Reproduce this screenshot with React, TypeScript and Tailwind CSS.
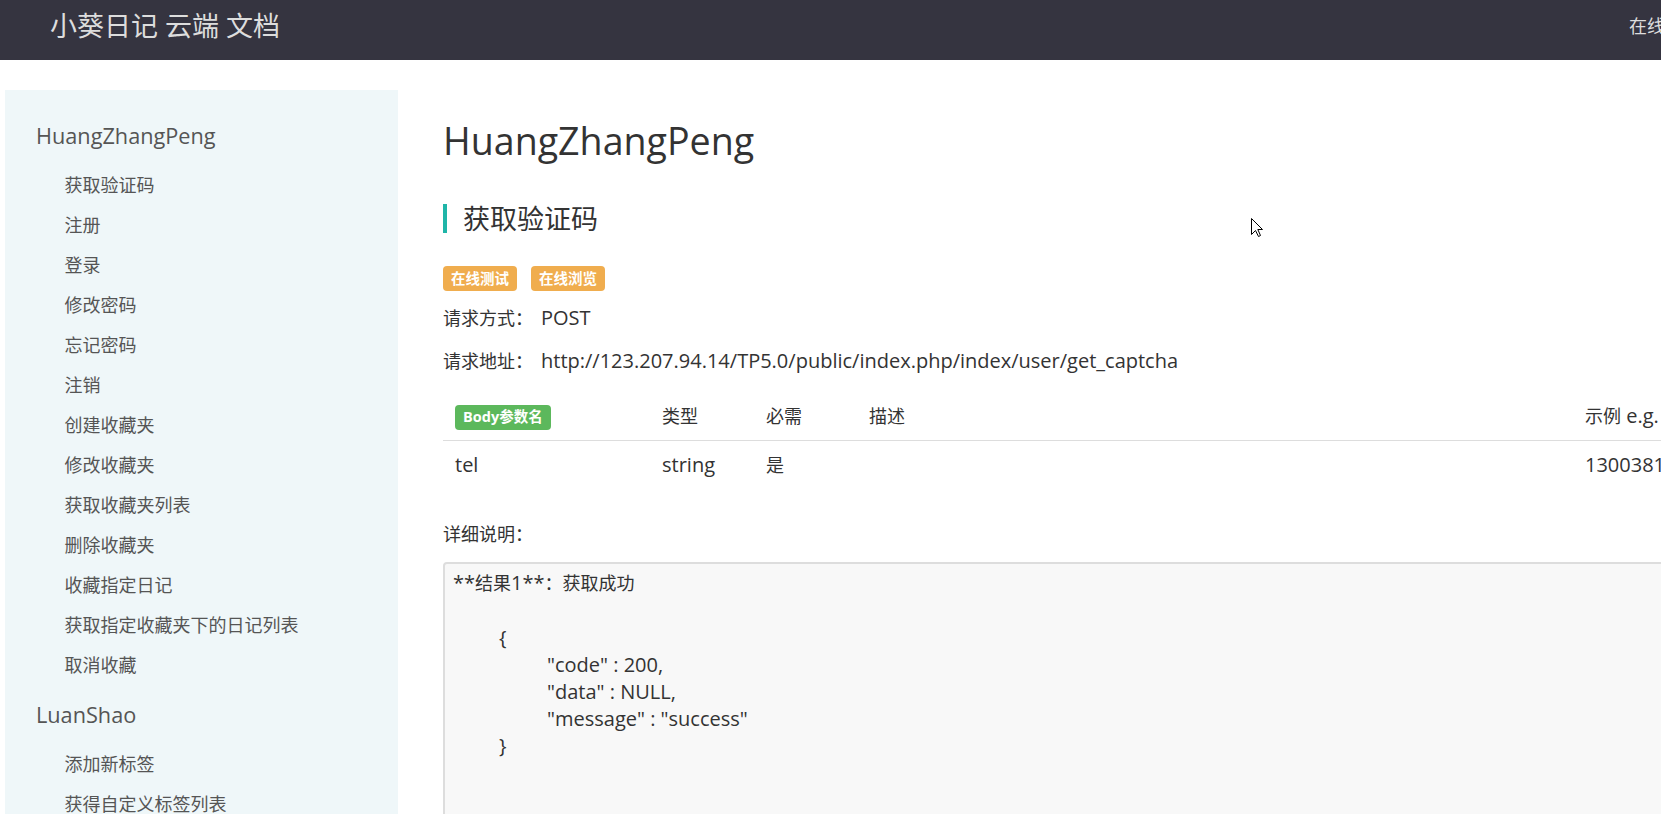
import React from 'react';

type Group = { title: string; items: string[] };

const groups: Group[] = [
    {
        title: 'HuangZhangPeng',
        items: [
            '获取验证码',
            '注册',
            '登录',
            '修改密码',
            '忘记密码',
            '注销',
            '创建收藏夹',
            '修改收藏夹',
            '获取收藏夹列表',
            '删除收藏夹',
            '收藏指定日记',
            '获取指定收藏夹下的日记列表',
            '取消收藏',
        ],
    },
    {
        title: 'LuanShao',
        items: ['添加新标签', '获得自定义标签列表'],
    },
];

const Sidebar: React.FC = () => (
    <aside className="w-[393px] shrink-0 min-h-[760px] bg-[#eff7f9] pt-[31px] pl-[31px] text-[#555]">
        {groups.map((g, gi) => (
            <div key={g.title} className={gi > 0 ? 'mt-[15px]' : ''}>
                <div className="text-[21.7px] leading-[30px]">{g.title}</div>
                <ul className="mt-[14px]">
                    {g.items.map((item) => (
                        <li key={item} className="h-[40px] flex items-center pl-[28.6px] text-[18px] whitespace-nowrap">
                            {item}
                        </li>
                    ))}
                </ul>
            </div>
        ))}
    </aside>
);

const Cursor: React.FC = () => (
    <svg className="absolute left-[1251px] top-[218px]" width="13" height="20" viewBox="0 0 13 20">
        <path d="M0.5 0.5 L0.5 16.5 L4.5 12.5 L7.5 18.5 L9.5 17.5 L6.8 11.5 L11.5 11.5 Z" fill="#fff" stroke="#000" strokeWidth="1" />
    </svg>
);

export default function App() {
    return (
        <div className="relative w-[1661px] h-[814px] overflow-hidden bg-white font-['Open_Sans','Noto_Sans_CJK_SC',sans-serif]">
            <header className="h-[60px] bg-[#353440]">
                <div className="w-[1751px] h-full px-[50px] pb-2 flex items-center justify-between text-[#ddd] whitespace-nowrap">
                    <span className="text-[27px]">小葵日记 云端 文档</span>
                    <span className="text-[18px]">在线测试</span>
                </div>
            </header>

            <div className="flex items-start pt-[30px] pl-[5px]">
                <Sidebar />

                <main className="ml-[45px] w-[1330px] shrink-0 pt-[29px] text-[#333] text-[18px]">
                    <h1 className="text-[37.6px] leading-[44px]">HuangZhangPeng</h1>

                    <h2 className="mt-[41px] border-l-4 border-[#1fb5a8] pl-4 text-[27px] leading-[29px]">获取验证码</h2>

                    <div className="mt-[33px] flex gap-[14px]">
                        <span className="h-[25px] px-[8px] rounded bg-[#f0ad4e] text-white text-[14.5px] font-bold leading-[25px]">在线测试</span>
                        <span className="h-[25px] px-[8px] rounded bg-[#f0ad4e] text-white text-[14.5px] font-bold leading-[25px]">在线浏览</span>
                    </div>

                    <p className="mt-[13px] leading-[27px]">
                        请求方式：<span className="ml-[8px] text-[20px]">POST</span>
                    </p>
                    <p className="mt-[15px] leading-[27px] whitespace-nowrap">
                        请求地址：<span className="ml-[8px] text-[20px]">http://123.207.94.14/TP5.0/public/index.php/index/user/get_captcha</span>
                    </p>

                    <div className="mt-[17px]">
                        <div className="grid grid-cols-[207px_104px_103px_716px_200px] h-[49px] items-center border-b border-[#ddd]">
                            <div className="px-3">
                                <span className="inline-flex items-center h-[25px] px-[8px] rounded bg-[#5cb85c] text-white text-[14.5px] font-bold">Body参数名</span>
                            </div>
                            <div className="px-3">类型</div>
                            <div className="px-3">必需</div>
                            <div className="px-3">描述</div>
                            <div className="px-3 whitespace-nowrap">
                                示例<span className="text-[20px]"> e.g.</span>
                            </div>
                        </div>
                        <div className="grid grid-cols-[207px_104px_103px_716px_200px] h-[48px] items-center">
                            <div className="px-3 text-[20px]">tel</div>
                            <div className="px-3 text-[20px]">string</div>
                            <div className="px-3">是</div>
                            <div className="px-3"></div>
                            <div className="px-3 text-[20px]">13003810000</div>
                        </div>
                    </div>

                    <p className="mt-[32px] leading-[27px]">详细说明：</p>

                    <div className="mt-[14px] h-[300px] border-2 border-[#ddd] rounded bg-[#f8f8f8] pt-[5px] pl-[8px] leading-[27px] whitespace-pre">
                        <div>
                            <span className="text-[20px]">**</span>结果<span className="text-[20px]">1**</span>：获取成功
                        </div>
                        <div className="h-[27px]"></div>
                        <div className="pl-[46px] text-[20px]">{'{'}</div>
                        <div className="pl-[94px] text-[20px]">"code" : 200,</div>
                        <div className="pl-[94px] text-[20px]">"data" : NULL,</div>
                        <div className="pl-[94px] text-[20px]">"message" : "success"</div>
                        <div className="pl-[46px] text-[20px]">{'}'}</div>
                    </div>
                </main>
            </div>

            <Cursor />
        </div>
    );
}
